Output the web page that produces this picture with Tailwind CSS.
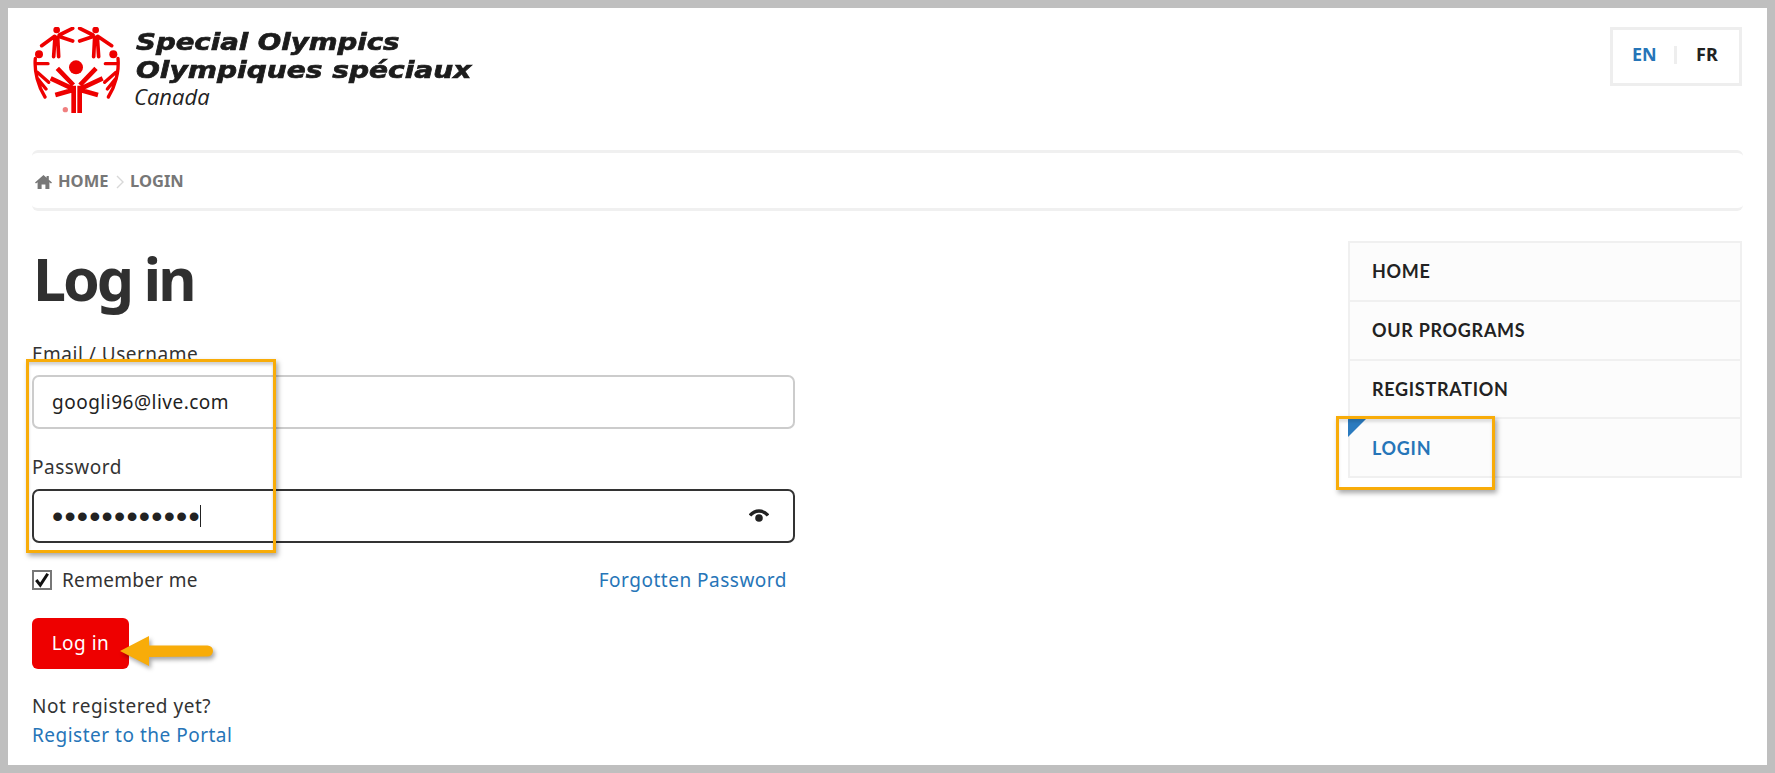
<!doctype html>
<html lang="en">
<head>
<meta charset="utf-8">
<title>Log in</title>
<script src="https://cdn.jsdelivr.net/npm/@tailwindcss/browser@4"></script>
</head>
<body class="m-0 bg-[#bfbfbf]">
<div class="relative h-[773px] w-[1775px] overflow-hidden border-8 border-[#bfbfbf] bg-white font-['Noto_Sans',sans-serif] text-[19px] tracking-[0.5px] text-[#333]">
  <div class="flex h-[142px] items-start justify-between pl-[25px] pr-[25px]">
    <div class="flex items-start pt-[19px]">
      <svg class="h-[86px] w-[88px]" viewBox="39 36 264 258" fill="none" stroke="#ee0000" stroke-linecap="round" aria-hidden="true">
        <circle cx="168" cy="157" r="21" fill="#ee0000" stroke="none"/>
        <g stroke-width="14">
          <path d="M161 212V294M112 160L160 210M92 190L156 220M106 240L156 226" stroke-linecap="butt"/>
          <circle cx="110" cy="45" r="10" fill="#ee0000" stroke="none"/>
          <path d="M101 125L105 66M116 125L113 66M158 40L118 60M158 78L122 66M65 92L104 64" stroke-width="11"/>
          <circle cx="57" cy="118" r="12" fill="#ee0000" stroke="none"/>
          <path d="M46 130C42 170 55 215 75 246M50 146L84 146M52 172L86 202M52 190L78 222" stroke-width="10"/>
        </g>
        <g stroke-width="14" transform="translate(340 0) scale(-1 1)">
          <path d="M161 212V294M112 160L160 210M92 190L156 220M106 240L156 226" stroke-linecap="butt"/>
          <circle cx="113" cy="45" r="10" fill="#ee0000" stroke="none"/>
          <path d="M104 125L108 66M119 125L116 66M161 40L121 60M161 78L125 66M65 92L107 64" stroke-width="11"/>
          <circle cx="60" cy="118" r="12" fill="#ee0000" stroke="none"/>
          <path d="M46 130C42 170 55 215 75 246M50 146L84 146M52 172L86 202M52 190L78 222" stroke-width="10"/>
        </g>
        <circle cx="136" cy="284" r="8" fill="#f08080" stroke="none"/>
      </svg>
      <div class="ml-[15px] flex flex-col pt-[1px] tracking-normal">
        <div class="h-[28px] origin-left scale-x-[1.2] font-['DejaVu_Sans',sans-serif] text-[23px] leading-[28px] font-bold whitespace-nowrap text-[#1c1c1c] italic [-webkit-text-stroke:0.7px_#1c1c1c]">Special Olympics</div>
        <div class="h-[28px] origin-left scale-x-[1.22] font-['DejaVu_Sans',sans-serif] text-[23px] leading-[28px] font-bold whitespace-nowrap text-[#1c1c1c] italic [-webkit-text-stroke:0.7px_#1c1c1c]">Olympiques spéciaux</div>
        <div class="-mt-[1px] -ml-[2px] font-['Open_Sans',sans-serif] text-[22px] leading-[26px] text-[#222] italic">Canada</div>
      </div>
    </div>
    <div class="mt-[19px] flex h-[59px] w-[132px] items-center border-[3px] border-[#eeeeee] pb-[4px] text-[18px] font-bold tracking-normal">
      <a class="ml-[19px] w-[26px] text-[#2675b8]">EN</a>
      <span class="ml-[16px] h-[18px] w-[3px] bg-[#eeeeee]"></span>
      <a class="ml-[19px] text-[#222]">FR</a>
    </div>
  </div>

  <nav class="mx-[24px] flex h-[61px] items-center rounded-[6px] border-y-[3px] border-[#f0f0f0] pt-[2px] pl-[3px] text-[16.5px] font-bold tracking-normal text-[#777]">
    <svg class="h-[16px] w-[17px]" viewBox="0 0 17 16" fill="#777" aria-hidden="true"><path d="M8.5 1L0 8.6L1 9.6L2.6 8.3V15H6.6V10.5H10.4V15H14.4V8.3L16 9.6L17 8.6L13.8 5.7V2H11.6V3.7Z"/></svg>
    <a class="ml-[6px] w-[51px]">HOME</a>
    <svg class="ml-[7px] h-[14px] w-[8px]" viewBox="0 0 8 14" fill="none" stroke="#d8d8d8" stroke-width="1.4" aria-hidden="true"><path d="M1 1L7 7L1 13"/></svg>
    <a class="ml-[6px]">LOGIN</a>
  </nav>

  <div class="flex items-start justify-between pr-[25px] pl-[24px]">
    <main class="w-[763px]">
      <h1 class="mt-[22px] h-[107px] pl-[1px] text-[59px] leading-[90px] font-bold tracking-[-3px] text-[#303030]">Log in</h1>
      <label class="block h-[35px] leading-[28px]">Email / Username</label>
      <input class="block h-[54px] w-full rounded-[7px] border-2 border-[#cccccc] pl-[18px] text-[#222] outline-none" value="googli96@live.com">
      <label class="mt-[24px] block h-[36px] leading-[28px]">Password</label>
      <div class="flex h-[54px] items-center rounded-[7px] border-2 border-[#333] pr-[24px] pl-[18px] text-[#222]">
        <span class="font-['Liberation_Sans',sans-serif] text-[32px] leading-[32px] tracking-[1.2px]">••••••••••••</span>
        <span class="-ml-[1px] h-[22px] w-[1px] bg-[#222]"></span>
        <svg class="ml-auto h-[16px] w-[20px]" viewBox="0 0 20 16" aria-hidden="true"><path d="M1 7.5C6 1.5 14 1.5 19 7.5" fill="none" stroke="#222" stroke-width="3.4"/><circle cx="10" cy="10" r="3.8" fill="#222"/></svg>
      </div>
      <div class="mt-[27px] flex h-[20px] items-center">
        <span class="flex h-[20px] w-[20px] items-center justify-center border-2 border-[#777]">
          <svg class="h-[16px] w-[16px]" viewBox="0 0 14 14" fill="none" stroke="#111" stroke-width="2.6" aria-hidden="true"><path d="M2 7L5.5 11.5L12 1.5"/></svg>
        </span>
        <span class="ml-[10px] tracking-[0.3px]">Remember me</span>
        <a class="mr-[8px] ml-auto text-[#2675b8]">Forgotten Password</a>
      </div>
      <button class="mt-[28px] block h-[51px] w-[97px] rounded-[6px] bg-[#ee0000] text-white">Log in</button>
      <p class="mt-[22px] h-[29px] leading-[30px]">Not registered yet?</p>
      <a class="block leading-[30px] text-[#2675b8]">Register to the Portal</a>
    </main>

    <aside class="relative mt-[30px] w-[394px] border-2 border-[#f0f0f0] bg-[#fcfcfc] font-['Lato',sans-serif] text-[18px] font-bold tracking-[0.7px] text-[#222]">
      <a class="flex h-[59px] items-center border-b-2 border-[#f0f0f0] pl-[22px]">HOME</a>
      <a class="flex h-[59px] items-center border-b-2 border-[#f0f0f0] pl-[22px]">OUR PROGRAMS</a>
      <a class="flex h-[58px] items-center border-b-2 border-[#f0f0f0] pl-[22px]">REGISTRATION</a>
      <a class="relative flex h-[57px] items-center pt-[1px] pl-[22px] text-[#2675b8]">LOGIN
        <span class="absolute -top-[2px] -left-[2px] h-0 w-0 border-t-[20px] border-r-[20px] border-t-[#2b7bbf] border-r-transparent"></span>
      </a>
    </aside>
  </div>

  <!-- screenshot annotations -->
  <div class="absolute top-[351px] left-[18px] h-[194px] w-[250px] border-[3px] border-[#f8ac09] shadow-[2px_3px_5px_rgba(0,0,0,0.35),inset_0_3px_3px_rgba(0,0,0,0.18)]"></div>
  <div class="absolute top-[408px] left-[1328px] h-[74px] w-[159px] border-[3px] border-[#f8ac09] shadow-[2px_3px_5px_rgba(0,0,0,0.35),inset_0_3px_3px_rgba(0,0,0,0.12)]"></div>
  <svg class="absolute top-[620px] left-[108px] h-[40px] w-[104px] drop-shadow-[2px_3px_2px_rgba(0,0,0,0.35)]" viewBox="0 0 104 40" aria-hidden="true">
    <path d="M4 23L33 8V17.5H91.5A5.5 5.5 0 0 1 91.5 28.5L33 29V38Z" fill="#f8ac09"/>
  </svg>
</div>
</body>
</html>
